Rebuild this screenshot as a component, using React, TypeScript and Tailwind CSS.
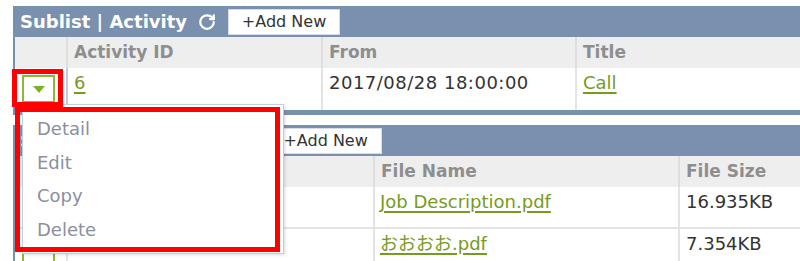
import { RotateCw } from 'lucide-react';

type Col = { label: string; width: string };

const linkCls = 'text-[#769b1d] underline underline-offset-[3px] decoration-[1.5px]';

const DropButton = () => (
  <div className="mt-[7px] ml-[7px] w-[33px] h-[28px] border-2 border-[#8cb83a] bg-white flex items-center justify-center">
    <svg width="12" height="7" viewBox="0 0 12 7">
      <polygon points="0,0 12,0 6,7" fill="#7ab22a" />
    </svg>
  </div>
);

const PanelHeader = ({ title }: { title: string }) => (
  <div className="h-[31px] bg-[#7990ae] flex items-center pl-[5px]">
    <span className="text-white font-bold text-[18px] leading-none whitespace-nowrap">{title}</span>
    <RotateCw className="ml-[11px] text-white" size={18} strokeWidth={3} />
    <button className="ml-[12px] h-[26px] w-[112px] bg-white border border-[#d6dde8] text-[16px] text-[#333] leading-none">
      +Add New
    </button>
  </div>
);

const HeaderRow = ({ cols, grid }: { cols: Col[]; grid: string }) => (
  <div className={`grid ${grid} h-[31px] bg-[#eeeeee]`}>
    <div className="border-r-2 border-[#dedede]" />
    {cols.map((c) => (
      <div key={c.label} className="border-r-2 border-[#dedede] pl-[6px] flex items-center text-[17px] font-bold text-[#8e8e8e] whitespace-nowrap">
        {c.label}
      </div>
    ))}
  </div>
);

export default function App() {
  return (
    <div className="relative w-[800px] h-[261px] overflow-hidden bg-white" style={{ fontFamily: '"DejaVu Sans", "Noto Sans CJK JP", sans-serif' }}>
      <div className="pt-[6px] pl-[13px] flex flex-col">
        {/* Activity panel */}
        <div className="w-[800px] border-l-2 border-[#7990ae]">
          <PanelHeader title="Sublist | Activity" />
          <HeaderRow
            grid="grid-cols-[53px_255px_254px_1fr]"
            cols={[
              { label: 'Activity ID', width: '' },
              { label: 'From', width: '' },
              { label: 'Title', width: '' },
            ]}
          />
          <div className="grid grid-cols-[53px_255px_254px_1fr] h-[42px] text-[18px] text-[#333]">
            <div className="border-r-2 border-[#b9cde6]">
              <DropButton />
            </div>
            <div className="border-r-2 border-[#e4e4e4] pl-[6px] pt-[1px]">
              <span className={linkCls}>6</span>
            </div>
            <div className="border-r-2 border-[#e4e4e4] pl-[6px] pt-[1px] tracking-[0.5px] whitespace-nowrap">2017/08/28 18:00:00</div>
            <div className="pl-[6px] pt-[1px]">
              <span className={linkCls}>Call</span>
            </div>
          </div>
          <div className="h-[5px] bg-[#7990ae]" />
        </div>

        {/* Attachment panel */}
        <div className="mt-[10px] w-[800px] border-l-2 border-[#7990ae]">
          <PanelHeader title="Sublist | Attachment" />
          <HeaderRow
            grid="grid-cols-[53px_307px_305px_1fr]"
            cols={[
              { label: '', width: '' },
              { label: 'File Name', width: '' },
              { label: 'File Size', width: '' },
            ]}
          />
          {[
            { name: 'Job Description.pdf', size: '16.935KB' },
            { name: 'おおおお.pdf', size: '7.354KB' },
          ].map((f) => (
            <div key={f.name} className="grid grid-cols-[53px_307px_305px_1fr] h-[42px] border-b-2 border-[#e4e4e4] text-[18px] text-[#333]">
              <div className="border-r-2 border-[#e4e4e4]">
                <DropButton />
              </div>
              <div className="border-r-2 border-[#e4e4e4]" />
              <div className="border-r-2 border-[#e4e4e4] pl-[5px] pt-[1px] whitespace-nowrap">
                <span className={linkCls}>{f.name}</span>
              </div>
              <div className="pl-[6px] pt-[1px]">{f.size}</div>
            </div>
          ))}
        </div>
      </div>

      {/* row action menu */}
      <div className="absolute left-[22px] top-[104px] w-[262px] h-[150px] bg-white border border-[#c3cde0] shadow-[1px_1px_3px_rgba(0,0,0,0.15)] py-[7px] pl-[14px] flex flex-col text-[18px] text-[#8b8fa0]">
        {['Detail', 'Edit', 'Copy', 'Delete'].map((m) => (
          <div key={m} className="h-[34px] flex items-center">
            {m}
          </div>
        ))}
      </div>

      {/* annotation boxes */}
      <div className="absolute left-[12px] top-[69px] w-[51px] h-[38px] border-[5px] border-[#ff0000]" />
      <div className="absolute left-[15px] top-[107px] w-[265px] h-[145px] border-[5px] border-[#ff0000]" />
    </div>
  );
}
